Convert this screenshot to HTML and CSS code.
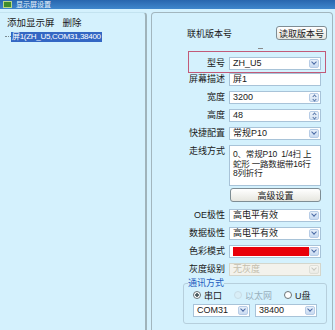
FILE: index.html
```html
<!DOCTYPE html>
<html lang="zh-CN">
<head>
    <meta charset="UTF-8">
    <meta name="viewport" content="width=device-width, initial-scale=1.0">
    <title>显示屏设置</title>
    <link rel="stylesheet" href="styles.css">
</head>
<body>
    <header class="titlebar">
        <span class="app-icon"></span>
        <span class="title">显示屏设置</span>
    </header>
    <main class="main">
        <section class="list-panel">
            <div class="toolbar">
                <span>添加显示屏</span>
                <span>删除</span>
            </div>
            <ul class="tree">
                <li class="selected">屏1(ZH_U5,COM31,38400</li>
            </ul>
        </section>

        <section class="config-panel">
            <div class="version-row">
                <span>联机版本号</span>
                <button class="btn">读取版本号</button>
            </div>
            <div class="grip"></div>

            <div class="model-box">
                <div class="row">
                    <label class="lbl">型号</label>
                    <div class="field">ZH_U5<i class="drop"></i></div>
                </div>
            </div>

            <div class="rows">
                <div class="row">
                    <label class="lbl">屏幕描述</label>
                    <div class="field">屏1</div>
                </div>
                <div class="row">
                    <label class="lbl">宽度</label>
                    <div class="field">3200<i class="spin"></i></div>
                </div>
                <div class="row">
                    <label class="lbl">高度</label>
                    <div class="field">48<i class="spin"></i></div>
                </div>
                <div class="row">
                    <label class="lbl">快捷配置</label>
                    <div class="field">常规P10<i class="drop"></i></div>
                </div>
                <div class="row">
                    <label class="lbl">走线方式</label>
                    <div class="field memo">0、常规P10&nbsp; 1/4扫 上<br>蛇形 一路数据带16行<br>8列折行</div>
                </div>
                <button class="btn btn-wide">高级设置</button>
                <div class="row">
                    <label class="lbl">OE极性</label>
                    <div class="field">高电平有效<i class="drop"></i></div>
                </div>
                <div class="row">
                    <label class="lbl">数据极性</label>
                    <div class="field">高电平有效<i class="drop"></i></div>
                </div>
                <div class="row">
                    <label class="lbl">色彩模式</label>
                    <div class="field"><span class="swatch"></span><i class="drop"></i></div>
                </div>
                <div class="row">
                    <label class="lbl">灰度级别</label>
                    <div class="field disabled">无灰度<i class="drop"></i></div>
                </div>
            </div>

            <fieldset class="comm">
                <legend>通讯方式</legend>
                <div class="radios">
                    <span class="radio checked"><i></i>串口</span>
                    <span class="radio off"><i></i>以太网</span>
                    <span class="radio"><i></i>U盘</span>
                </div>
                <div class="ports">
                    <div class="field port-com">COM31<i class="drop"></i></div>
                    <div class="field port-baud">38400<i class="drop"></i></div>
                </div>
            </fieldset>
        </section>
    </main>
</body>
</html>
```

FILE: styles.css
```css
* {
    box-sizing: border-box;
}
body {
    margin: 0;
    height: 330px;
    overflow: hidden;
    background-color: #d4f1fd;
    font-family: "Liberation Sans", "Noto Sans CJK SC", sans-serif;
    font-size: 9px;
    color: #1a1a1a;
}

/* title bar */
.titlebar {
    height: 9px;
    overflow: hidden;
    display: flex;
    align-items: center;
    gap: 4px;
    padding-left: 3px;
    background-image: linear-gradient(#2866ae, #3f86cc);
}
.app-icon {
    width: 9px;
    height: 7px;
    background-color: #3f8c2c;
    border: 1px solid #b9d88a;
}
.title {
    color: #e8f2fb;
    font-size: 7px;
    line-height: 9px;
}

.main {
    display: flex;
    padding-top: 3px;
    height: 321px;
}

/* left: screen list */
.list-panel {
    width: 147px;
    margin-right: 4px;
    border-top: 1px solid #c3e3f0;
    border-right: 2px solid #9fb3ba;
    border-top-right-radius: 4px;
}
.toolbar {
    display: flex;
    gap: 8px;
    padding-left: 7px;
    margin-top: 4px;
    line-height: 12px;
    font-size: 9.5px;
}
.tree {
    list-style: none;
    margin: 2px 0 0;
    padding: 0 0 0 11px;
    position: relative;
}
.tree::before {
    content: "";
    position: absolute;
    left: 5px;
    top: 5px;
    width: 6px;
    border-top: 1px dotted #7a8a90;
}
.tree li {
    display: inline-block;
    padding: 0 1px;
    line-height: 10px;
    font-size: 8px;
    letter-spacing: -0.3px;
}
.tree li.selected {
    background-color: #3367c4;
    color: #fff;
}

/* right: screen parameters */
.config-panel {
    width: 182px;
    padding-left: 35px;
    border: 1px solid #a2b6be;
    border-bottom: none;
    border-radius: 4px 4px 0 0;
}
.version-row {
    display: flex;
    justify-content: space-between;
    align-items: center;
    margin-top: 13px;
    padding-right: 5px;
    height: 14px;
}
.btn {
    font: inherit;
    color: #1a1a1a;
    padding: 0;
    height: 14px;
    width: 51px;
    border: 1px solid #7e8d94;
    border-radius: 3px;
    background-image: linear-gradient(#ffffff, #e6e6df);
}
.grip {
    width: 5px;
    height: 1px;
    background-color: #8a8a8a;
    margin: 8px 0 0 71px;
}
.model-box {
    margin: 2px 0 0 1px;
    width: 138px;
    padding: 5px 0 0;
    border: 1px solid #c25a78;
}
.model-box .row {
    margin-bottom: 2px;
}
.model-box .lbl {
    width: 36px;
}
.row {
    display: flex;
    align-items: flex-start;
    gap: 4px;
    margin-bottom: 5px;
}
.lbl {
    width: 38px;
    text-align: right;
    line-height: 13px;
    white-space: nowrap;
}
.field {
    position: relative;
    width: 92px;
    height: 13px;
    line-height: 11px;
    padding-left: 3px;
    background-color: #fff;
    border: 1px solid #a8c3d8;
    white-space: nowrap;
}
.memo {
    height: 41px;
    padding-top: 4px;
    font-size: 8.5px;
    letter-spacing: -0.2px;
    line-height: 9.5px;
    overflow: hidden;
}
.btn-wide {
    display: block;
    width: 91px;
    margin: -3px 0 7px 43px;
}
.disabled {
    background-color: #f3f2ec;
    border-color: #d4d6cc;
    color: #c4bfae;
}
.swatch {
    display: block;
    width: 76px;
    height: 9px;
    margin-top: 1px;
    background-color: #e8000a;
}

/* dropdown and spinner buttons */
.drop,
.spin {
    position: absolute;
    right: 1px;
    top: 1px;
    width: 10px;
    height: 9px;
    border: 1px solid #b7cce6;
    border-radius: 2px;
    background-image: linear-gradient(#e6effa, #c8daf1);
}
.drop::after {
    content: "";
    position: absolute;
    left: 2px;
    top: 0px;
    width: 3px;
    height: 3px;
    border-right: 1.5px solid #4a6aa4;
    border-bottom: 1.5px solid #4a6aa4;
    transform: rotate(45deg);
}
.disabled .drop {
    border-color: #dedfd8;
    background-image: linear-gradient(#f6f6f2, #ebebe5);
}
.disabled .drop::after {
    border-color: #c8c8c0;
}
.spin {
    background-image: linear-gradient(#eef4fb, #d6e3f3);
}
.spin::before,
.spin::after {
    content: "";
    position: absolute;
    left: 3px;
    width: 2px;
    height: 2px;
    border-left: 1px solid #5a78aa;
    border-top: 1px solid #5a78aa;
    transform: rotate(45deg);
}
.spin::before {
    top: 1px;
}
.spin::after {
    top: 4px;
    transform: rotate(225deg);
}

/* communication group */
.comm {
    margin: -3px 0 0 -4px;
    width: 144px;
    padding: 0 0 6px 9px;
    border: 1px solid #b6cfdc;
    border-radius: 3px;
}
.comm legend {
    padding: 0;
    margin-left: -5px;
    color: #1d5cbf;
    line-height: 10px;
}
.radios {
    display: flex;
    align-items: center;
    gap: 12px;
    height: 12px;
    margin-top: 1px;
}
.radio {
    display: flex;
    align-items: center;
    gap: 3px;
}
.radio i {
    width: 8px;
    height: 8px;
    border: 1px solid #6a7478;
    border-radius: 50%;
    background-color: #fff;
}
.radio.checked i {
    background-image: radial-gradient(#4a5a60 1.5px, #fff 2px);
}
.radio.off {
    color: #9ab0bd;
}
.radio.off i {
    border-color: #c8dce6;
    background-color: #d9eef7;
}
.ports {
    display: flex;
    gap: 5px;
    margin-top: 3px;
}
.port-com {
    width: 57px;
}
.port-baud {
    width: 62px;
}
```
